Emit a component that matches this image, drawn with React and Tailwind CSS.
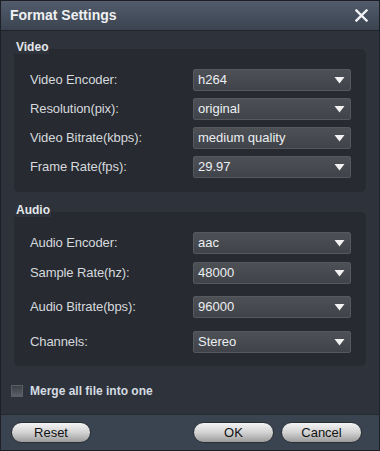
import React from "react";

function Arrow() {
  return (
    <svg width="11" height="7" viewBox="0 0 11 7" className="shrink-0">
      <path d="M0.5 0 H10.5 L5.5 6.5 Z" fill="#f2f2f2" />
    </svg>
  );
}

function Row({ label, value, className = "" }) {
  return (
    <div className={"flex items-center h-[22px] " + className}>
      <div className="w-[163px] text-[13px] tracking-[-0.1px] text-[#d6d9dd]">{label}</div>
      <div className="w-[158px] h-[22px] rounded-[2px] bg-gradient-to-b from-[#4d5055] to-[#404349] border border-[#55585d] flex items-center justify-between pl-[4px] pr-[5px]">
        <span className="text-[13px] text-[#eceff2]">{value}</span>
        <Arrow />
      </div>
    </div>
  );
}

function Group({ title, children, className = "", pad = "" }) {
  return (
    <div className={className}>
      <div className="relative z-10 w-fit ml-[14px] px-[1px] bg-[#2e333b] text-[12px] leading-[14px] font-bold text-[#e4e7ea]">
        {title}
      </div>
      <div className={"mt-[-5px] mx-[13px] rounded-[5px] bg-[#272b31] pl-[16px] " + pad}>
        {children}
      </div>
    </div>
  );
}

function Btn({ children, className = "" }) {
  return (
    <button className={"h-[21px] rounded-full bg-gradient-to-b from-[#f4f4f4] via-[#d2d2d2] to-[#9c9c9c] border border-[#2a2f36] text-[13px] text-[#111] leading-none flex items-center justify-center " + className}>
      {children}
    </button>
  );
}

export default function App() {
  return (
    <div
      className="w-[380px] h-[451px] flex flex-col bg-[#2e333b] border border-[#1d2127] overflow-hidden"
      style={{ fontFamily: '"Liberation Sans", Arial, sans-serif' }}
    >
      <div className="h-[30px] shrink-0 bg-gradient-to-b from-[#525c6b] to-[#3b4350] border-b border-[#1f242b] flex items-center justify-between pl-[9px] pr-[11px]">
        <span className="text-[14px] font-bold text-[#eef0f2]">Format Settings</span>
        <svg width="13" height="13" viewBox="0 0 13 13">
          <path d="M1.5 1.5 L11.5 11.5 M11.5 1.5 L1.5 11.5" stroke="#f0f2f4" strokeWidth="2.4" strokeLinecap="square" />
        </svg>
      </div>

      <div className="flex-1 flex flex-col">
        <Group title="Video" className="mt-[9px]" pad="pt-[20px] pb-[14px]">
          <Row label="Video Encoder:" value="h264" />
          <Row label="Resolution(pix):" value="original" className="mt-[7px]" />
          <Row label="Video Bitrate(kbps):" value="medium quality" className="mt-[7px]" />
          <Row label="Frame Rate(fps):" value="29.97" className="mt-[7px]" />
        </Group>

        <Group title="Audio" className="mt-[11px]" pad="pt-[20px] pb-[13px]">
          <Row label="Audio Encoder:" value="aac" />
          <Row label="Sample Rate(hz):" value="48000" className="mt-[8px]" />
          <Row label="Audio Bitrate(bps):" value="96000" className="mt-[12px]" />
          <Row label="Channels:" value="Stereo" className="mt-[13px]" />
        </Group>

        <div className="mt-[16px] ml-[10px] flex items-center">
          <div className="w-[12px] h-[12px] border border-[#5a5f66] bg-gradient-to-b from-[#3c4149] to-[#5b6068]" />
          <span className="ml-[7px] text-[12px] font-bold text-[#d5dbe2]">Merge all file into one</span>
        </div>
      </div>

      <div className="h-[36px] shrink-0 bg-[#3a4350] border-t border-[#262b32] flex items-center pl-[10px] pr-[17px]">
        <Btn className="w-[80px]">Reset</Btn>
        <div className="flex-1" />
        <Btn className="w-[81px]">OK</Btn>
        <Btn className="w-[81px] ml-[7px]">Cancel</Btn>
      </div>
    </div>
  );
}
